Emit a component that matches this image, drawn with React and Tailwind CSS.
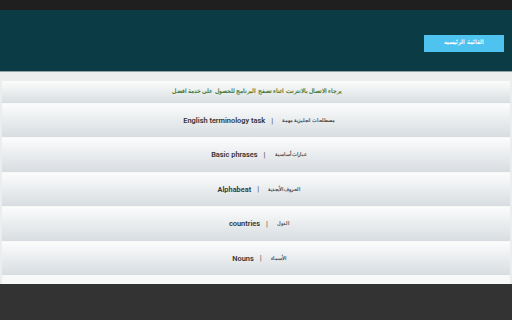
import React from 'react';

const items = [
  { en: 'English terminology task', ar: 'مصطلحات انجليزية مهمة' },
  { en: 'Basic phrases', ar: 'عبارات أساسية' },
  { en: 'Alphabeat', ar: 'الحروف الأبجدية' },
  { en: 'countries', ar: 'الدول' },
  { en: 'Nouns', ar: 'الأسماء' },
];

const Row = ({ en, ar }) => (
  <div className="h-[33.4px] flex items-center justify-center bg-gradient-to-b from-[#fbfcfc] to-[#d8dde1]">
    <div className="flex items-center ml-[6px] leading-none">
      <span className="text-[7.4px] font-semibold text-[#333]">{en}</span>
      <span className="text-[8px] text-[#555] ml-[6px] mr-[9px]">|</span>
      <span dir="rtl" className="text-[5.2px] text-[#4a4a4a] font-semibold">{ar}</span>
    </div>
  </div>
);

const App = () => {
  return (
    <div className="w-[512px] h-[320px] flex flex-col bg-[#333333] font-['Roboto','Noto_Sans',sans-serif]">
      <div className="h-[10px] bg-[#1f1f1f]" />
      <div className="h-[61px] bg-[#0b3b45] flex items-center justify-end pr-[8px] pt-[5px]">
        <button className="w-[80px] h-[17px] bg-[#4fc3f0] text-white text-[5.5px] font-bold flex items-center justify-center leading-none">
          <span dir="rtl">القائمة الرئيسيه</span>
        </button>
      </div>
      <div className="h-px bg-[#8fa3a4]" />
      <div className="h-[212px] bg-[#eceeed] pt-[9px] px-[2px]">
        <div className="flex flex-col gap-px bg-[#f7f8f8] h-full">
          <div className="h-[22px] flex items-center justify-center bg-gradient-to-b from-[#fbfcfc] to-[#d9dee1] leading-none">
            <span dir="rtl" className="text-[5.7px] font-bold text-[#4b7a35] ml-[2px]">
              يرجاء الاتصال بالانترنت اثناء تصفح البرنامج للحصول على خدمة افضل
            </span>
          </div>
          {items.map((it) => (
            <Row key={it.en} en={it.en} ar={it.ar} />
          ))}
        </div>
      </div>
    </div>
  );
};

export default App;
